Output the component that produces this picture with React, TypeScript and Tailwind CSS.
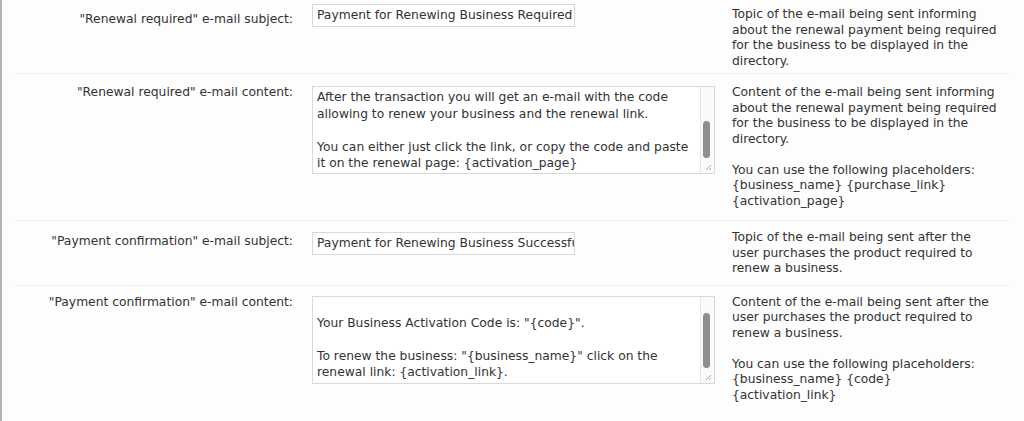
import React from "react";

type Row = {
  label: string;
  kind: "input" | "textarea";
  value?: string;
  lines?: string[];
  offset?: string;
  thumb?: string;
  desc: string[];
  pad: string;
  labelTop: string;
  fieldTop: string;
  descTop: string;
};

const rows: Row[] = [
  {
    label: '"Renewal required" e-mail subject:',
    kind: "input",
    value: "Payment for Renewing Business Required",
    desc: [
      "Topic of the e-mail being sent informing",
      "about the renewal payment being required",
      "for the business to be displayed in the",
      "directory.",
    ],
    pad: "pt-[4px] pb-[4px]",
    labelTop: "mt-[8px]",
    fieldTop: "mt-0",
    descTop: "mt-[3px]",
  },
  {
    label: '"Renewal required" e-mail content:',
    kind: "textarea",
    lines: [
      "After the transaction you will get an e-mail with the code",
      "allowing to renew your business and the renewal link.",
      "",
      "You can either just click the link, or copy the code and paste",
      "it on the renewal page: {activation_page}",
    ],
    offset: "pt-[2px]",
    thumb: "top-[34px] h-[37px]",
    desc: [
      "Content of the e-mail being sent informing",
      "about the renewal payment being required",
      "for the business to be displayed in the",
      "directory.",
      "",
      "You can use the following placeholders:",
      "{business_name} {purchase_link}",
      "{activation_page}",
    ],
    pad: "pt-[11px] pb-[11px]",
    labelTop: "mt-0",
    fieldTop: "mt-[1px]",
    descTop: "mt-0",
  },
  {
    label: '"Payment confirmation" e-mail subject:',
    kind: "input",
    value: "Payment for Renewing Business Successful",
    desc: [
      "Topic of the e-mail being sent after the",
      "user purchases the product required to",
      "renew a business.",
    ],
    pad: "pt-[9px] pb-[8px]",
    labelTop: "mt-[4px]",
    fieldTop: "mt-[2px]",
    descTop: "mt-0",
  },
  {
    label: '"Payment confirmation" e-mail content:',
    kind: "textarea",
    lines: [
      "Thank you for your payment, your purchase is ready.",
      "",
      'Your Business Activation Code is: "{code}".',
      "",
      'To renew the business: "{business_name}" click on the',
      "renewal link: {activation_link}.",
    ],
    offset: "-mt-[15px]",
    thumb: "top-[16px] h-[55px]",
    desc: [
      "Content of the e-mail being sent after the",
      "user purchases the product required to",
      "renew a business.",
      "",
      "You can use the following placeholders:",
      "{business_name} {code}",
      "{activation_link}",
    ],
    pad: "pt-[9px] pb-[10px]",
    labelTop: "mt-0",
    fieldTop: "mt-[1px]",
    descTop: "mt-0",
  },
];

function Grip() {
  return (
    <svg width="7" height="7" viewBox="0 0 7 7" className="absolute right-[2px] bottom-[2px]">
      <path d="M6 1 L1 6 M6 4 L4 6" stroke="#9a9a9a" strokeWidth="0.8" />
    </svg>
  );
}

function TextArea({ row }: { row: Row }) {
  return (
    <div className="relative w-[403px] h-[88px] border border-[#d9d9d9] bg-white overflow-hidden">
      <div className={`pl-[4px] pr-[18px] leading-[16.5px] ${row.offset}`}>
        {row.lines!.map((l, i) => (
          <div key={i} className="whitespace-nowrap h-[16.5px]">
            {l}
          </div>
        ))}
      </div>
      <div className="absolute right-0 top-0 bottom-0 w-[14px] border-l border-[#e6e6e6] bg-[#fafafa]">
        <div className={`absolute left-[2px] w-[7px] rounded-full bg-[#8e8e8e] ${row.thumb}`} />
        <Grip />
      </div>
    </div>
  );
}

export default function App() {
  return (
    <div className="min-h-screen bg-[#fdfdfd] border-l-2 border-[#b4b4b4] font-['DejaVu_Sans',Verdana,sans-serif] text-[12.3px] text-[#333333]">
      <div className="ml-[13px] mr-[14px]">
        {rows.map((row) => (
          <div
            key={row.label}
            className={`flex items-start border-b border-[#efefef] last:border-b-0 ${row.pad}`}
          >
            <div className={`w-[286px] shrink-0 pr-[8px] text-right leading-[15px] ${row.labelTop}`}>
              {row.label}
            </div>
            <div className={`w-[420px] shrink-0 ml-[11px] ${row.fieldTop}`}>
              {row.kind === "input" ? (
                <div className="w-[263px] h-[23px] border border-[#d9d9d9] bg-white pl-[4px] pr-[2px] leading-[21px] overflow-hidden whitespace-nowrap">
                  {row.value}
                </div>
              ) : (
                <TextArea row={row} />
              )}
            </div>
            <div className={`flex-1 leading-[15.5px] ${row.descTop}`}>
              {row.desc.map((d, i) => (
                <div key={i} className="h-[15.5px] whitespace-nowrap">
                  {d}
                </div>
              ))}
            </div>
          </div>
        ))}
      </div>
    </div>
  );
}
